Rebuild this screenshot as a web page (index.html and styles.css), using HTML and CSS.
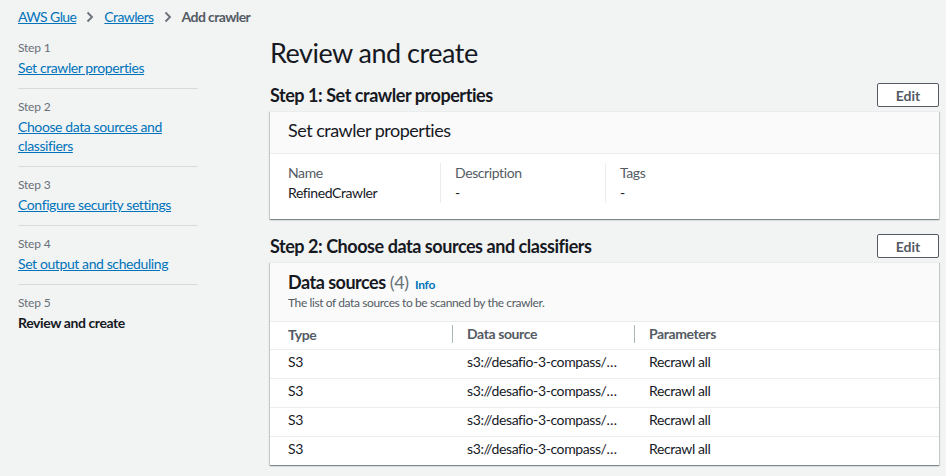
FILE: index.html
```html
<!DOCTYPE html>
<html>
<head>
<meta charset="utf-8">
<link rel="stylesheet" href="styles.css">
</head>
<body>
<nav class="crumbs">
  <a href="#">AWS Glue</a>
  <svg class="chev" width="8" height="12" viewBox="0 0 8 12"><path d="M1.5 1.5 L6 6 L1.5 10.5" fill="none" stroke="#687078" stroke-width="1.8"/></svg>
  <a href="#">Crawlers</a>
  <svg class="chev" width="8" height="12" viewBox="0 0 8 12"><path d="M1.5 1.5 L6 6 L1.5 10.5" fill="none" stroke="#687078" stroke-width="1.8"/></svg>
  <span class="current">Add crawler</span>
</nav>
<div class="layout">
  <aside class="steps">
    <div class="step"><div class="step-no">Step 1</div><a href="#" class="step-link">Set crawler properties</a></div>
    <div class="step"><div class="step-no">Step 2</div><a href="#" class="step-link">Choose data sources and classifiers</a></div>
    <div class="step"><div class="step-no">Step 3</div><a href="#" class="step-link">Configure security settings</a></div>
    <div class="step"><div class="step-no">Step 4</div><a href="#" class="step-link">Set output and scheduling</a></div>
    <div class="step"><div class="step-no">Step 5</div><div class="step-current">Review and create</div></div>
  </aside>
  <main class="main">
    <h1 class="title">Review and create</h1>
    <section class="section">
      <div class="section-head">
        <h2>Step 1: Set crawler properties</h2>
        <button class="btn">Edit</button>
      </div>
      <div class="card">
        <div class="card-head"><h3>Set crawler properties</h3></div>
        <div class="kv">
          <div class="kv-col kv-a"><div class="kv-label">Name</div><div class="kv-val">RefinedCrawler</div></div>
          <div class="kv-col kv-b"><div class="kv-label">Description</div><div class="kv-val">-</div></div>
          <div class="kv-col kv-c"><div class="kv-label">Tags</div><div class="kv-val">-</div></div>
        </div>
      </div>
    </section>
    <section class="section">
      <div class="section-head">
        <h2>Step 2: Choose data sources and classifiers</h2>
        <button class="btn">Edit</button>
      </div>
      <div class="card">
        <div class="table-head">
          <div class="th-title"><span class="th-name">Data sources</span> <span class="th-count">(4)</span> <a href="#" class="info">Info</a></div>
          <div class="th-desc">The list of data sources to be scanned by the crawler.</div>
        </div>
        <table class="tbl">
          <thead>
            <tr><th class="c1">Type</th><th class="c2"><span class="div">Data source</span></th><th class="c3"><span class="div">Parameters</span></th></tr>
          </thead>
          <tbody>
            <tr><td>S3</td><td>s3://desafio-3-compass/…</td><td>Recrawl all</td></tr>
            <tr><td>S3</td><td>s3://desafio-3-compass/…</td><td>Recrawl all</td></tr>
            <tr><td>S3</td><td>s3://desafio-3-compass/…</td><td>Recrawl all</td></tr>
            <tr><td>S3</td><td>s3://desafio-3-compass/…</td><td>Recrawl all</td></tr>
          </tbody>
        </table>
      </div>
    </section>
  </main>
</div>
</body>
</html>
```
FILE: styles.css
```css
* { box-sizing: border-box; }
html, body { margin: 0; padding: 0; }
body {
  background: #f2f3f3;
  font-family: Lato, "Open Sans", sans-serif;
  font-size: 14px;
  letter-spacing: -0.4px;
  color: #16191f;
  width: 946px;
  height: 476px;
  overflow: hidden;
}
a { color: #0073bb; }
.crumbs {
  display: flex;
  align-items: center;
  height: 32px;
  padding: 0 0 0 18px;
  font-size: 14px;
  letter-spacing: -0.6px;
}
.crumbs a { text-decoration: underline; }
.chev { margin: 1px 10px 0 10px; }
.current { color: #545b64; font-weight: 700; }

.layout { display: flex; }
.steps {
  width: 180px;
  margin-left: 18px;
  padding-top: 8px;
}
.step {
  border-bottom: 1px solid #d5dbdb;
  padding: 0 0 11px 0;
  margin-bottom: 10px;
  line-height: 19px;
}
.step:last-child { border-bottom: none; }
.step-no { color: #687078; font-size: 12px; line-height: 16px; margin-bottom: 2px; letter-spacing: -0.2px; }
.step-link { font-size: 14px; }
.step-current { font-weight: 700; }

.main {
  margin-left: 72px;
  width: 669px;
}
.title {
  font-size: 27px;
  font-weight: 400;
  letter-spacing: -0.5px;
  margin: 2px 0 0 0;
  line-height: 38px;
  color: #16191f;
}
.section-head {
  display: flex;
  justify-content: space-between;
  align-items: center;
  padding: 11px 0 4px;
}
.section-head h2 {
  font-size: 18px;
  font-weight: 700;
  letter-spacing: -0.45px;
  margin: 0;
  line-height: 22px;
}
.btn {
  font-family: inherit;
  font-size: 14px;
  font-weight: 700;
  color: #545b64;
  background: #fff;
  border: 1px solid #545b64;
  border-radius: 2px;
  width: 62px;
  height: 24px;
  padding: 0;
}
.section + .section { margin-top: 4px; }
.card {
  background: #fff;
  border-top: 1px solid #eaeded;
  box-shadow: 0 1px 1px 0 rgba(0,28,36,.3), 1px 1px 1px 0 rgba(0,28,36,.15), -1px 1px 1px 0 rgba(0,28,36,.15);
}
.card-head {
  background: #fafafa;
  border-bottom: 1px solid #eaeded;
  padding: 7px 18px 12px;
}
.card-head h3 { margin: 0; font-size: 18px; font-weight: 400; letter-spacing: -0.5px; line-height: 22px; }
.kv { display: flex; padding: 9px 0 16px 18px; }
.kv-col { line-height: 20px; }
.kv-a { width: 152px; }
.kv-b { width: 165px; border-left: 1px solid #eaeded; padding-left: 14px; }
.kv-c { border-left: 1px solid #eaeded; padding-left: 14px; }
.kv-label { color: #545b64; }
.kv-val { color: #16191f; }

.table-head {
  background: #fafafa;
  padding: 9px 18px 10px;
  border-bottom: 1px solid #eaeded;
}
.th-title { font-size: 18px; line-height: 20px; }
.th-name { font-weight: 700; letter-spacing: -0.5px; }
.th-count { color: #687078; }
.info { font-size: 12px; font-weight: 700; text-decoration: none; margin-left: 2px; letter-spacing: -0.2px; }
.th-desc { font-size: 12px; color: #545b64; line-height: 16px; letter-spacing: -0.4px; }
.tbl { width: 100%; border-collapse: collapse; }
.tbl th {
  text-align: left;
  font-weight: 700;
  color: #545b64;
  height: 27px;
  padding: 0 0 2px 18px;
  border-bottom: 1px solid #eaeded;
}
.tbl th.c1 { width: 182px; }
.tbl th.c2 { width: 182px; padding-left: 0; }
.tbl th.c3 { padding-left: 0; }
.div { display: block; border-left: 1px solid #aab7b8; padding-left: 14px; line-height: 18px; }
.tbl td {
  height: 28px;
  line-height: 20px;
  padding: 2px 0 6px 18px;
  vertical-align: top;
  border-bottom: 1px solid #eaeded;
}
.tbl td:nth-child(2), .tbl td:nth-child(3) { padding-left: 15px; }
.tbl tr:last-child td { border-bottom: none; }
```
